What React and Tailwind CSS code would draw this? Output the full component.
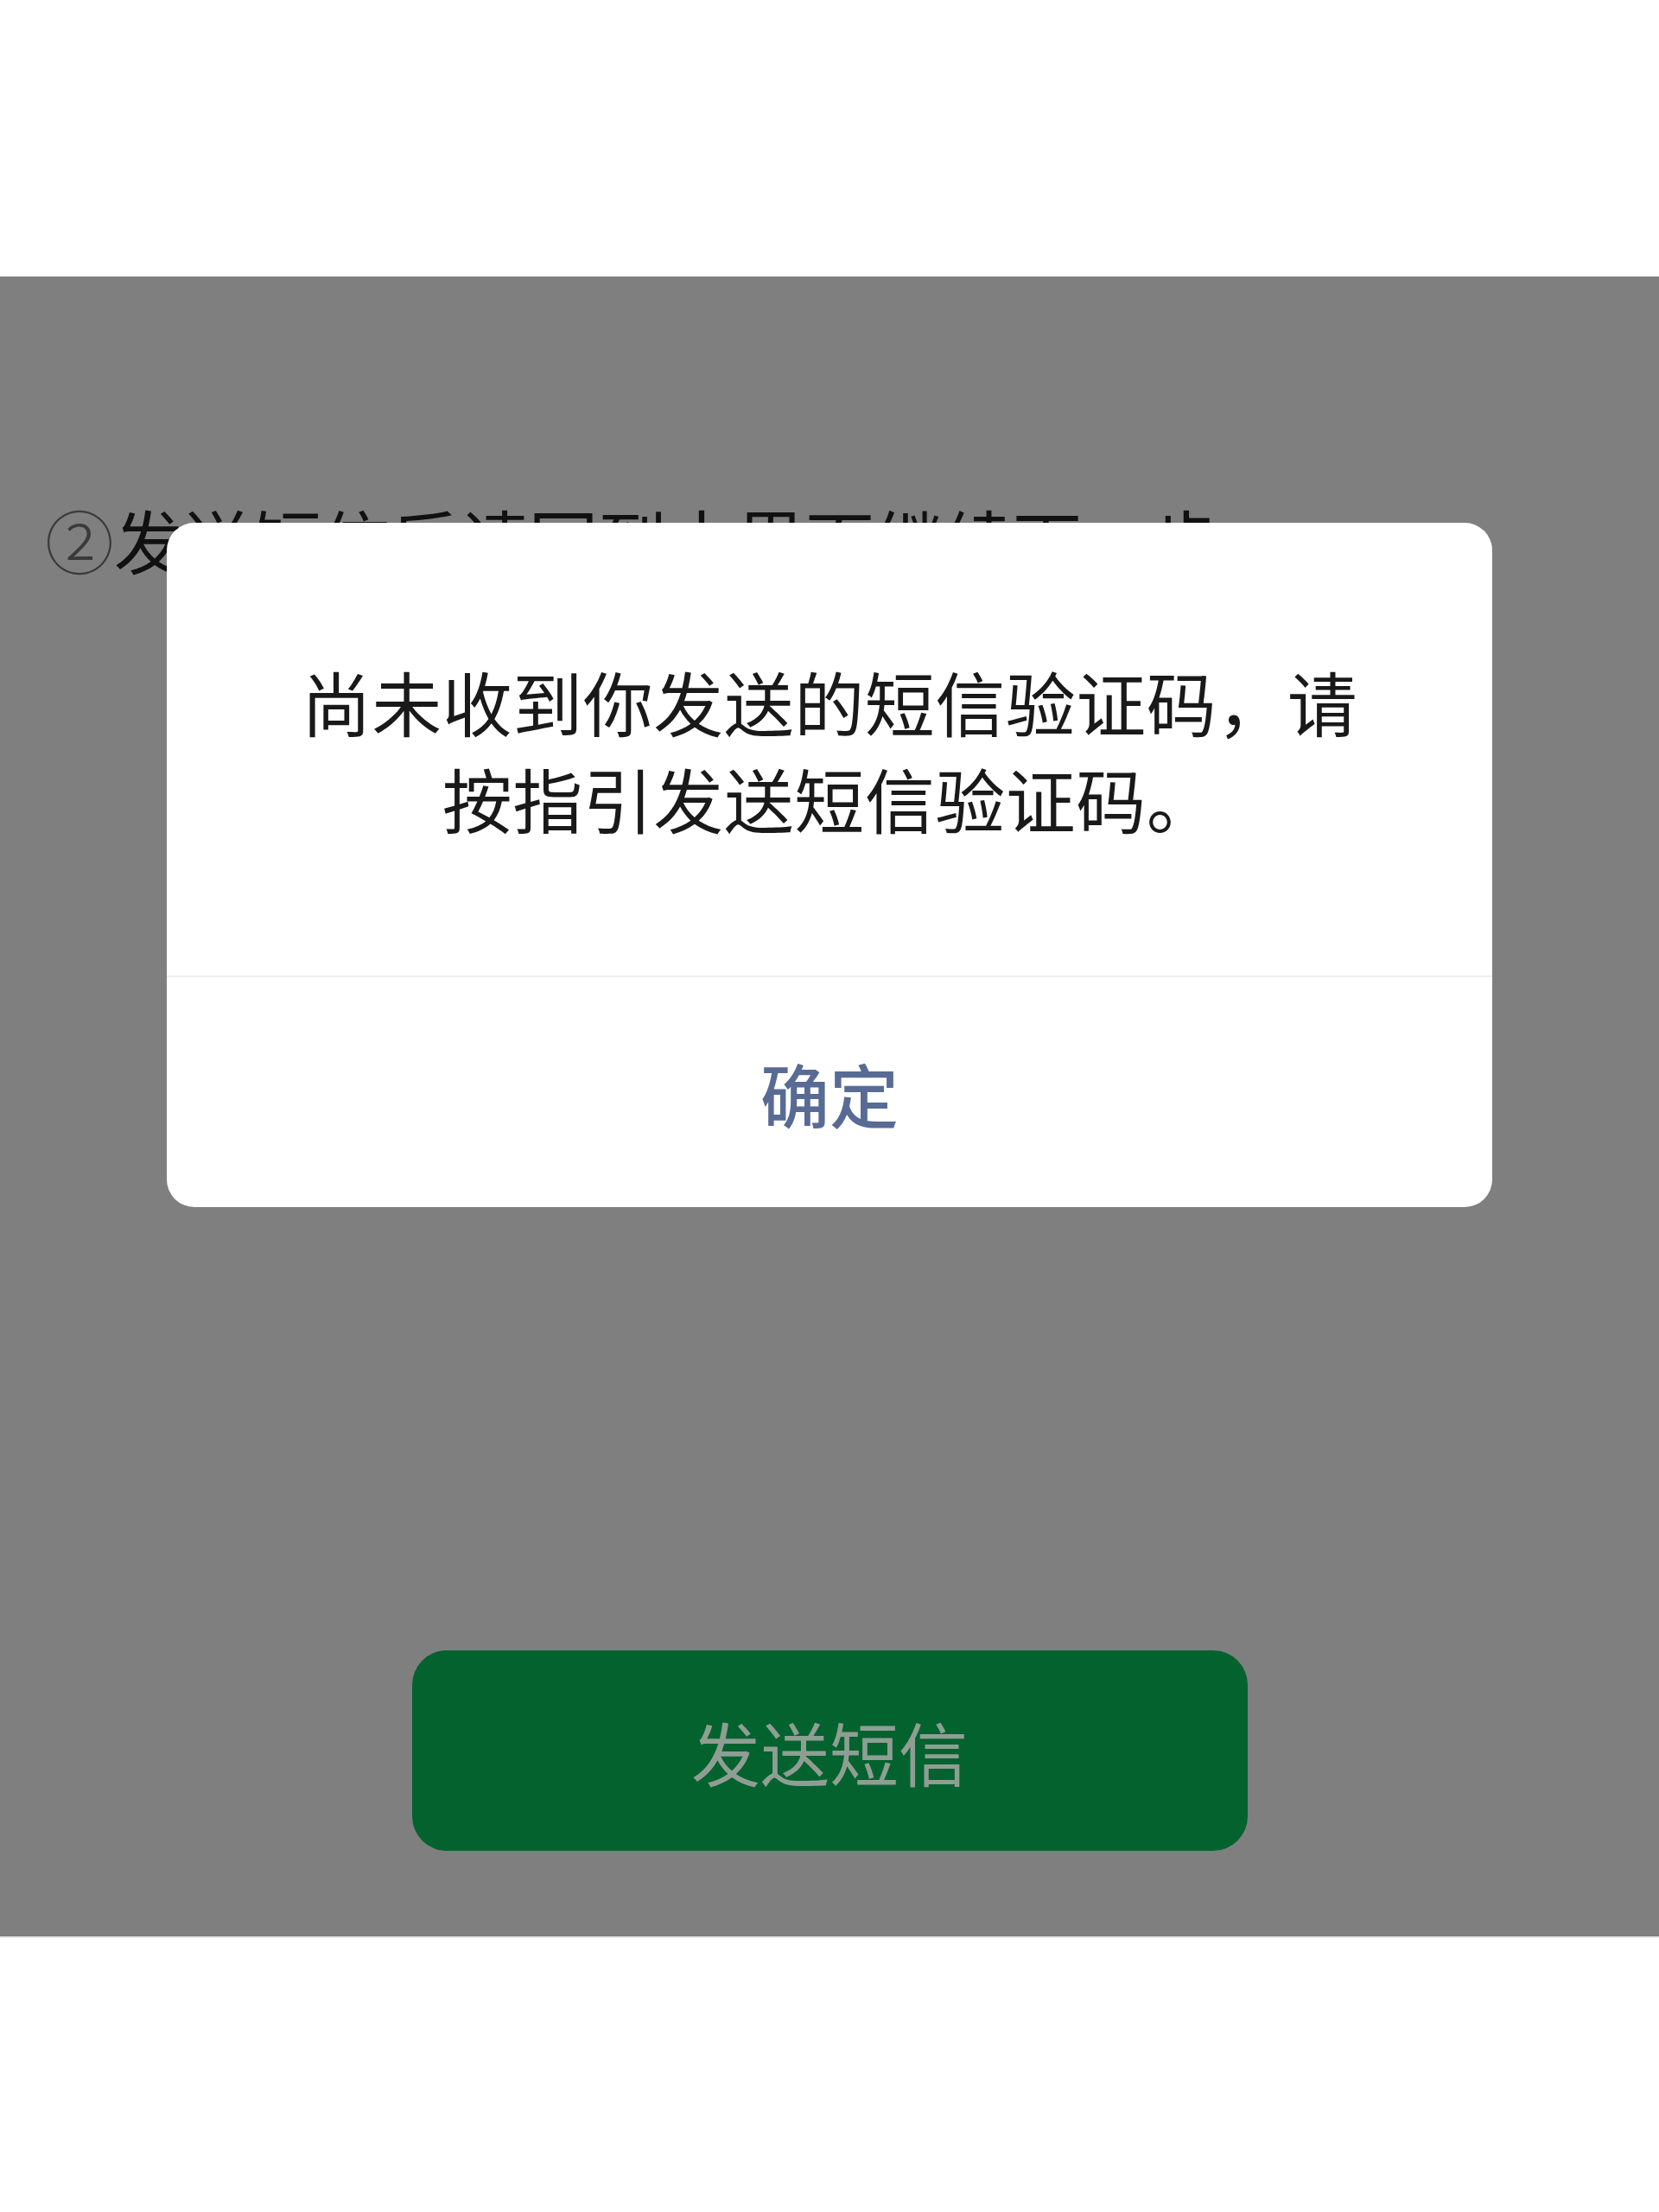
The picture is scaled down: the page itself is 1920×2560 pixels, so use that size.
import React from "react";

export default function App() {
  return (
    <div
      className="w-[1920px] h-[2560px] bg-white flex flex-col"
      style={{ fontFamily: '"Noto Sans CJK SC", "Noto Sans", sans-serif' }}
    >
      <div className="h-[320px] bg-white" />
      <div className="relative h-[1921px] bg-[#7f7f7f] flex flex-col">
        <div className="pt-[247px] pl-[52px] text-[80px] leading-[112px] text-[#111111] whitespace-nowrap">
          <span className="text-[#3a3a3a] font-light">②</span>发送短信后请回到本界面继续下一步
        </div>
        <div className="mt-[1231px] mx-auto w-[967px] h-[232px] rounded-[40px] bg-[#04622f] flex items-center justify-center text-[80px] text-[#8f9e93]">
          发送短信
        </div>

        <div className="absolute left-[193px] top-[285px] w-[1534px] h-[792px] bg-white rounded-[32px] flex flex-col overflow-hidden">
          <div className="h-[524px] px-[130px] pt-[150px] text-center text-[81px] tracking-[0.5px] leading-[112px] text-[#191919]">
            尚未收到你发送的短信验证码，请按指引发送短信验证码。
          </div>
          <div className="h-[2px] bg-[#efefef]" />
          <div className="flex-1 flex items-center justify-center text-[80px] font-medium text-[#576b95]">
            确定
          </div>
        </div>
      </div>
      <div className="flex-1 bg-white border-t-2 border-[#e6e6e6]" />
    </div>
  );
}
